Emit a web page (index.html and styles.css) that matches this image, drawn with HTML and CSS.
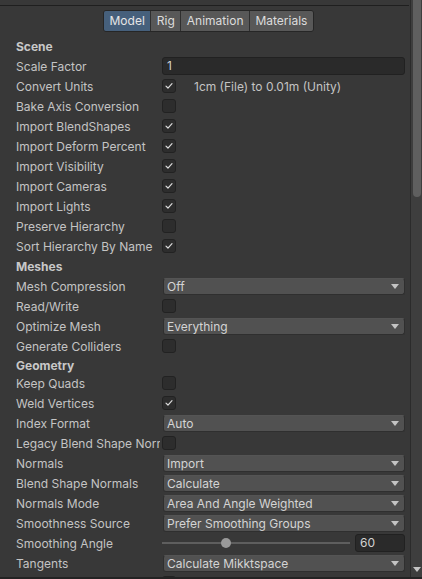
FILE: index.html
```html
<!DOCTYPE html>
<html>
<head>
<meta charset="utf-8">
<link rel="stylesheet" href="styles.css">
</head>
<body>
<div class="window">
  <div class="main">
    <div class="topgap"></div>
    <div class="tabbar">
      <div class="tabs">
        <div class="tab active">Model</div>
        <div class="tab">Rig</div>
        <div class="tab">Animation</div>
        <div class="tab">Materials</div>
      </div>
    </div>
    <div class="props">
      <div class="hdr">Scene</div>
      <div class="row"><span class="lbl">Scale Factor</span><div class="field">1</div></div>
      <div class="row"><span class="lbl">Convert Units</span><div class="ctl"><span class="cb on"><svg viewBox="0 0 14 14"><polyline points="3.5,7.2 5.8,9.4 10.5,4.3"/></svg></span><span class="note">1cm (File) to 0.01m (Unity)</span></div></div>
      <div class="row"><span class="lbl">Bake Axis Conversion</span><div class="ctl"><span class="cb"></span></div></div>
      <div class="row"><span class="lbl">Import BlendShapes</span><div class="ctl"><span class="cb on"><svg viewBox="0 0 14 14"><polyline points="3.5,7.2 5.8,9.4 10.5,4.3"/></svg></span></div></div>
      <div class="row"><span class="lbl">Import Deform Percent</span><div class="ctl"><span class="cb on"><svg viewBox="0 0 14 14"><polyline points="3.5,7.2 5.8,9.4 10.5,4.3"/></svg></span></div></div>
      <div class="row"><span class="lbl">Import Visibility</span><div class="ctl"><span class="cb on"><svg viewBox="0 0 14 14"><polyline points="3.5,7.2 5.8,9.4 10.5,4.3"/></svg></span></div></div>
      <div class="row"><span class="lbl">Import Cameras</span><div class="ctl"><span class="cb on"><svg viewBox="0 0 14 14"><polyline points="3.5,7.2 5.8,9.4 10.5,4.3"/></svg></span></div></div>
      <div class="row"><span class="lbl">Import Lights</span><div class="ctl"><span class="cb on"><svg viewBox="0 0 14 14"><polyline points="3.5,7.2 5.8,9.4 10.5,4.3"/></svg></span></div></div>
      <div class="row"><span class="lbl">Preserve Hierarchy</span><div class="ctl"><span class="cb"></span></div></div>
      <div class="row"><span class="lbl">Sort Hierarchy By Name</span><div class="ctl"><span class="cb on"><svg viewBox="0 0 14 14"><polyline points="3.5,7.2 5.8,9.4 10.5,4.3"/></svg></span></div></div>

      <div class="hdr">Meshes</div>
      <div class="row"><span class="lbl">Mesh Compression</span><div class="dd">Off<svg class="arr" viewBox="0 0 8 5"><polygon points="0,0 8,0 4,5"/></svg></div></div>
      <div class="row"><span class="lbl">Read/Write</span><div class="ctl"><span class="cb"></span></div></div>
      <div class="row"><span class="lbl">Optimize Mesh</span><div class="dd">Everything<svg class="arr" viewBox="0 0 8 5"><polygon points="0,0 8,0 4,5"/></svg></div></div>
      <div class="row"><span class="lbl">Generate Colliders</span><div class="ctl"><span class="cb"></span></div></div>

      <div class="hdr short">Geometry</div>
      <div class="row"><span class="lbl">Keep Quads</span><div class="ctl"><span class="cb"></span></div></div>
      <div class="row"><span class="lbl">Weld Vertices</span><div class="ctl"><span class="cb on"><svg viewBox="0 0 14 14"><polyline points="3.5,7.2 5.8,9.4 10.5,4.3"/></svg></span></div></div>
      <div class="row"><span class="lbl">Index Format</span><div class="dd">Auto<svg class="arr" viewBox="0 0 8 5"><polygon points="0,0 8,0 4,5"/></svg></div></div>
      <div class="row"><span class="lbl">Legacy Blend Shape Normals</span><div class="ctl"><span class="cb"></span></div></div>
      <div class="row"><span class="lbl">Normals</span><div class="dd">Import<svg class="arr" viewBox="0 0 8 5"><polygon points="0,0 8,0 4,5"/></svg></div></div>
      <div class="row"><span class="lbl">Blend Shape Normals</span><div class="dd">Calculate<svg class="arr" viewBox="0 0 8 5"><polygon points="0,0 8,0 4,5"/></svg></div></div>
      <div class="row"><span class="lbl">Normals Mode</span><div class="dd">Area And Angle Weighted<svg class="arr" viewBox="0 0 8 5"><polygon points="0,0 8,0 4,5"/></svg></div></div>
      <div class="row"><span class="lbl">Smoothness Source</span><div class="dd">Prefer Smoothing Groups<svg class="arr" viewBox="0 0 8 5"><polygon points="0,0 8,0 4,5"/></svg></div></div>
      <div class="row"><span class="lbl">Smoothing Angle</span><div class="slider"><div class="track"><span class="knob" style="left: 64px"></span></div><div class="num">60</div></div></div>
      <div class="row"><span class="lbl">Tangents</span><div class="dd">Calculate Mikktspace<svg class="arr" viewBox="0 0 8 5"><polygon points="0,0 8,0 4,5"/></svg></div></div>
      <div class="row"><span class="lbl"></span><div class="ctl"><span class="cb"></span></div></div>
    </div>
  </div>
  <div class="scrollbar">
    <div class="thumb"></div>
    <svg class="sb-arrow" viewBox="0 0 8 5"><polygon points="0,0 8,0 4,5"/></svg>
  </div>
</div>
<div class="bottom-edge"></div>
</body>
</html>
```

FILE: styles.css
```css
html, body {
  margin: 0;
  padding: 0;
}
body {
  background: #383838;
  font-family: Inter, "Noto Sans", "Liberation Sans", sans-serif;
  font-size: 12px;
  color: #c4c4c4;
  width: 422px;
  height: 579px;
  overflow: hidden;
}
.window {
  display: flex;
  height: 577px;
}
.main {
  width: 410px;
  overflow: hidden;
}
.topgap {
  height: 5px;
  border-bottom: 1px solid #1f1f1f;
  margin-right: 1px;
}
.tabbar {
  display: flex;
  justify-content: center;
  margin-top: 4px;
  padding-left: 7px;
}
.tabs {
  display: flex;
  border: 1px solid #262626;
  border-radius: 3px;
  overflow: hidden;
}
.tab {
  height: 20px;
  line-height: 20px;
  padding: 0 5.5px;
  background: #585858;
  color: #dcdcdc;
  border-left: 1px solid #2f2f2f;
}
.tab:first-child {
  border-left: none;
}
.tab.active {
  background: #46607c;
  color: #e6e6e6;
}
.props {
  padding: 5px 5px 0 16px;
}
.hdr {
  height: 20px;
  line-height: 20px;
  font-weight: 700;
  color: #c8c8c8;
}
.hdr.short {
  height: 17px;
  line-height: 17px;
}
.row {
  display: grid;
  grid-template-columns: 144px 1fr;
  column-gap: 2px;
  height: 20px;
  align-items: center;
}
.lbl {
  white-space: nowrap;
  overflow: hidden;
  line-height: 20px;
}
.ctl {
  display: flex;
  align-items: center;
}
.cb {
  box-sizing: border-box;
  width: 14px;
  height: 14px;
  background: #2d2d2d;
  border: 1px solid #222222;
  border-radius: 3px;
  margin-bottom: 2px;
  display: block;
}
.cb svg {
  display: block;
  width: 12px;
  height: 12px;
}
.cb polyline {
  fill: none;
  stroke: #dcdcdc;
  stroke-width: 1.4;
  stroke-linecap: round;
  stroke-linejoin: round;
}
.note {
  margin-left: 18px;
  margin-bottom: 2px;
}
.field {
  box-sizing: border-box;
  height: 18px;
  line-height: 16px;
  background: #2a2a2a;
  border: 1px solid #212121;
  border-radius: 3px;
  padding: 0 4px;
  color: #d2d2d2;
  margin-bottom: 2px;
}
.dd {
  box-sizing: border-box;
  height: 17px;
  line-height: 15px;
  margin-left: 1px;
  margin-bottom: 2px;
  background: #515151;
  border: 1px solid #2f2f2f;
  border-top-color: #545454;
  border-radius: 3px;
  padding: 0 3px;
  color: #d4d4d4;
  display: flex;
  justify-content: space-between;
  align-items: center;
}
.arr {
  width: 8px;
  height: 5px;
  margin-right: 2px;
  fill: #c4c4c4;
}
.slider {
  display: flex;
  align-items: center;
}
.track {
  position: relative;
  flex: 1;
  height: 2px;
  background: #5e5e5e;
  margin-bottom: 2px;
}
.knob {
  position: absolute;
  top: -4px;
  width: 10px;
  height: 10px;
  margin-left: -5px;
  border-radius: 50%;
  background: #999999;
}
.num {
  box-sizing: border-box;
  width: 50px;
  height: 18px;
  line-height: 16px;
  margin-left: 5px;
  margin-bottom: 2px;
  background: #2a2a2a;
  border: 1px solid #212121;
  border-radius: 3px;
  padding: 0 4px;
  color: #d2d2d2;
}
.scrollbar {
  width: 12px;
  box-sizing: border-box;
  background: #3e3e3e;
  border-left: 1px solid #2b2b2b;
  display: flex;
  flex-direction: column;
  align-items: center;
}
.thumb {
  width: 8px;
  height: 197px;
  background: #5f5f5f;
  border-radius: 0 0 4px 4px;
}
.sb-arrow {
  margin-top: auto;
  margin-bottom: 5px;
  width: 8px;
  height: 5px;
  fill: #c4c4c4;
}
.bottom-edge {
  height: 2px;
  background: #232323;
}
```
